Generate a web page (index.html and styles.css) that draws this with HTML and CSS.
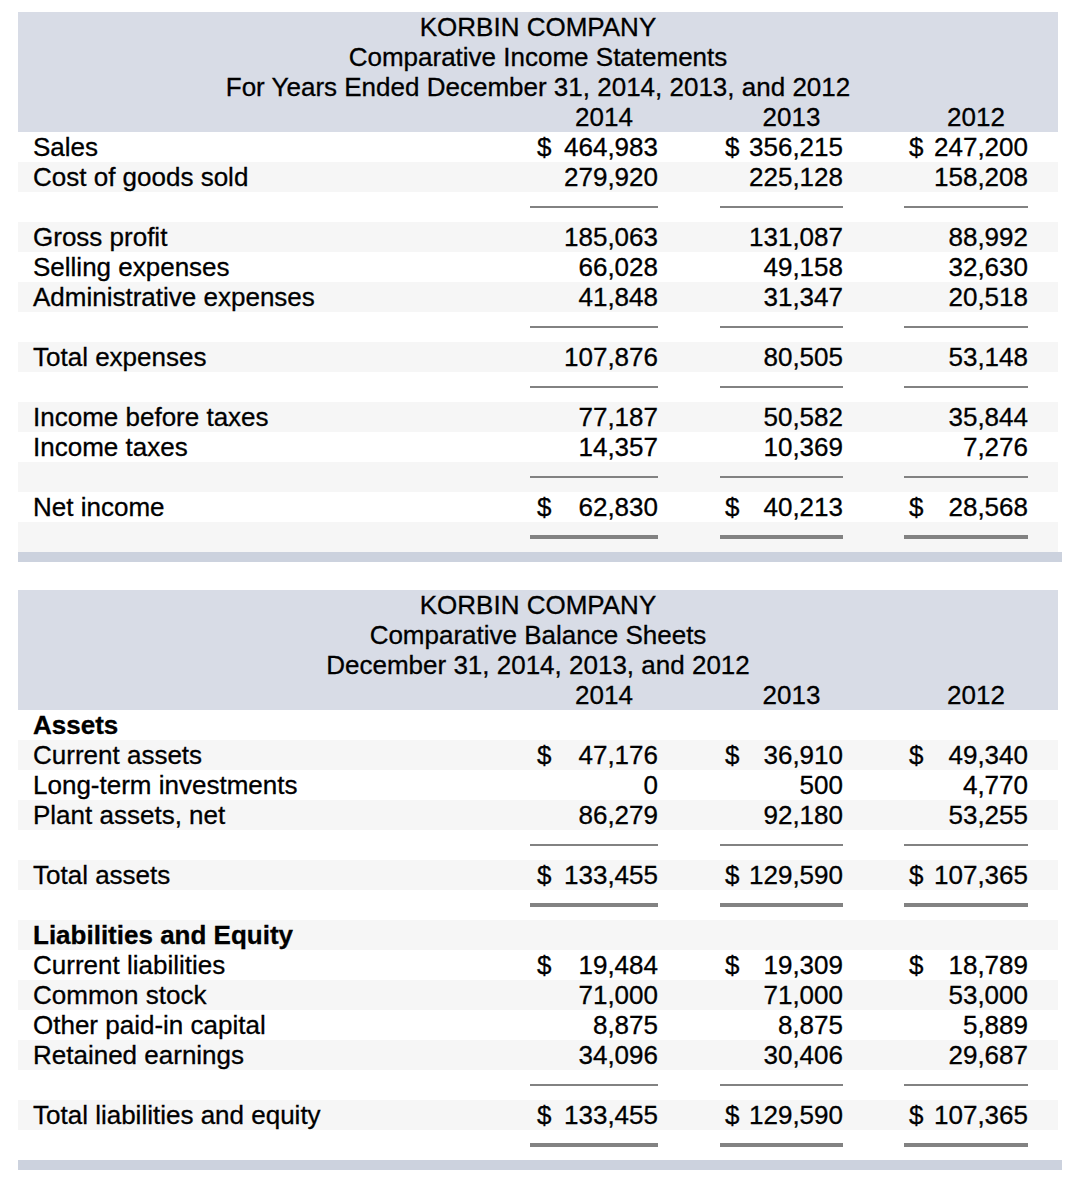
FILE: index.html
```html
<!DOCTYPE html>
<html lang="en">
<head>
<meta charset="utf-8">
<title>Korbin Company</title>
<link rel="stylesheet" href="styles.css">
</head>
<body>
<section class="statement">
  <div class="head">
    <div class="line">KORBIN COMPANY</div>
    <div class="line">Comparative Income Statements</div>
    <div class="line">For Years Ended December 31, 2014, 2013, and 2012</div>
    <div class="row years"><span></span><span class="year">2014</span><span class="year">2013</span><span class="year">2012</span></div>
  </div>
  <div class="body">
    <div class="row"><span class="label">Sales</span><span class="num dollar"><i>$</i><b>464,983</b></span><span class="num dollar"><i>$</i><b>356,215</b></span><span class="num dollar"><i>$</i><b>247,200</b></span></div>
    <div class="row"><span class="label">Cost of goods sold</span><span class="num">279,920</span><span class="num">225,128</span><span class="num">158,208</span></div>
    <div class="row"><span></span><span class="rule"></span><span class="rule"></span><span class="rule"></span></div>
    <div class="row"><span class="label">Gross profit</span><span class="num">185,063</span><span class="num">131,087</span><span class="num">88,992</span></div>
    <div class="row"><span class="label">Selling expenses</span><span class="num">66,028</span><span class="num">49,158</span><span class="num">32,630</span></div>
    <div class="row"><span class="label">Administrative expenses</span><span class="num">41,848</span><span class="num">31,347</span><span class="num">20,518</span></div>
    <div class="row"><span></span><span class="rule"></span><span class="rule"></span><span class="rule"></span></div>
    <div class="row"><span class="label">Total expenses</span><span class="num">107,876</span><span class="num">80,505</span><span class="num">53,148</span></div>
    <div class="row"><span></span><span class="rule"></span><span class="rule"></span><span class="rule"></span></div>
    <div class="row"><span class="label">Income before taxes</span><span class="num">77,187</span><span class="num">50,582</span><span class="num">35,844</span></div>
    <div class="row"><span class="label">Income taxes</span><span class="num">14,357</span><span class="num">10,369</span><span class="num">7,276</span></div>
    <div class="row"><span></span><span class="rule"></span><span class="rule"></span><span class="rule"></span></div>
    <div class="row"><span class="label">Net income</span><span class="num dollar"><i>$</i><b>62,830</b></span><span class="num dollar"><i>$</i><b>40,213</b></span><span class="num dollar"><i>$</i><b>28,568</b></span></div>
    <div class="row"><span></span><span class="rule heavy"></span><span class="rule heavy"></span><span class="rule heavy"></span></div>
  </div>
  <div class="bar"></div>
</section>

<section class="statement">
  <div class="head">
    <div class="line">KORBIN COMPANY</div>
    <div class="line">Comparative Balance Sheets</div>
    <div class="line">December 31, 2014, 2013, and 2012</div>
    <div class="row years"><span></span><span class="year">2014</span><span class="year">2013</span><span class="year">2012</span></div>
  </div>
  <div class="body">
    <div class="row"><span class="label strong">Assets</span><span></span><span></span><span></span></div>
    <div class="row"><span class="label">Current assets</span><span class="num dollar"><i>$</i><b>47,176</b></span><span class="num dollar"><i>$</i><b>36,910</b></span><span class="num dollar"><i>$</i><b>49,340</b></span></div>
    <div class="row"><span class="label">Long-term investments</span><span class="num">0</span><span class="num">500</span><span class="num">4,770</span></div>
    <div class="row"><span class="label">Plant assets, net</span><span class="num">86,279</span><span class="num">92,180</span><span class="num">53,255</span></div>
    <div class="row"><span></span><span class="rule"></span><span class="rule"></span><span class="rule"></span></div>
    <div class="row"><span class="label">Total assets</span><span class="num dollar"><i>$</i><b>133,455</b></span><span class="num dollar"><i>$</i><b>129,590</b></span><span class="num dollar"><i>$</i><b>107,365</b></span></div>
    <div class="row"><span></span><span class="rule heavy"></span><span class="rule heavy"></span><span class="rule heavy"></span></div>
    <div class="row"><span class="label strong">Liabilities and Equity</span><span></span><span></span><span></span></div>
    <div class="row"><span class="label">Current liabilities</span><span class="num dollar"><i>$</i><b>19,484</b></span><span class="num dollar"><i>$</i><b>19,309</b></span><span class="num dollar"><i>$</i><b>18,789</b></span></div>
    <div class="row"><span class="label">Common stock</span><span class="num">71,000</span><span class="num">71,000</span><span class="num">53,000</span></div>
    <div class="row"><span class="label">Other paid-in capital</span><span class="num">8,875</span><span class="num">8,875</span><span class="num">5,889</span></div>
    <div class="row"><span class="label">Retained earnings</span><span class="num">34,096</span><span class="num">30,406</span><span class="num">29,687</span></div>
    <div class="row"><span></span><span class="rule"></span><span class="rule"></span><span class="rule"></span></div>
    <div class="row"><span class="label">Total liabilities and equity</span><span class="num dollar"><i>$</i><b>133,455</b></span><span class="num dollar"><i>$</i><b>129,590</b></span><span class="num dollar"><i>$</i><b>107,365</b></span></div>
    <div class="row"><span></span><span class="rule heavy"></span><span class="rule heavy"></span><span class="rule heavy"></span></div>
  </div>
  <div class="bar"></div>
</section>
</body>
</html>
```

FILE: styles.css
```css
html, body {
  margin: 0;
  background: #ffffff;
}

body {
  padding: 12px 0 0 18px;
  font-family: "Liberation Sans", Arial, Helvetica, sans-serif;
  font-size: 26px;
  line-height: 30px;
  color: #000000;
  -webkit-text-stroke: 0.3px #000000;
}

.statement {
  width: 1044px;
  margin-bottom: 28px;
}

.head {
  width: 1040px;
  background: #d8dce6;
}

.line {
  height: 30px;
  text-align: center;
  white-space: nowrap;
}

.row {
  display: grid;
  grid-template-columns: 451px 128px 124px 124px;
  column-gap: 61px;
  width: 1040px;
  height: 30px;
}

.row > span {
  white-space: nowrap;
}

.row > span:nth-child(3) {
  margin-left: 1px;
}

.year {
  text-align: center;
  padding-left: 20px;
}

.body .row:nth-child(even) {
  background: #f6f6f6;
}

.label {
  padding-left: 15px;
}

.strong {
  font-weight: bold;
}

.num {
  text-align: right;
}

.dollar {
  display: flex;
  justify-content: space-between;
  padding-left: 5px;
}

.row > .dollar:nth-child(2) {
  padding-left: 7px;
}

.dollar i,
.dollar b {
  font-style: normal;
  font-weight: normal;
}

.rule {
  align-self: center;
  height: 2px;
  background: #828282;
}

.rule.heavy {
  height: 4px;
}

.bar {
  width: 1044px;
  height: 10px;
  background: #ccd2de;
}
```
